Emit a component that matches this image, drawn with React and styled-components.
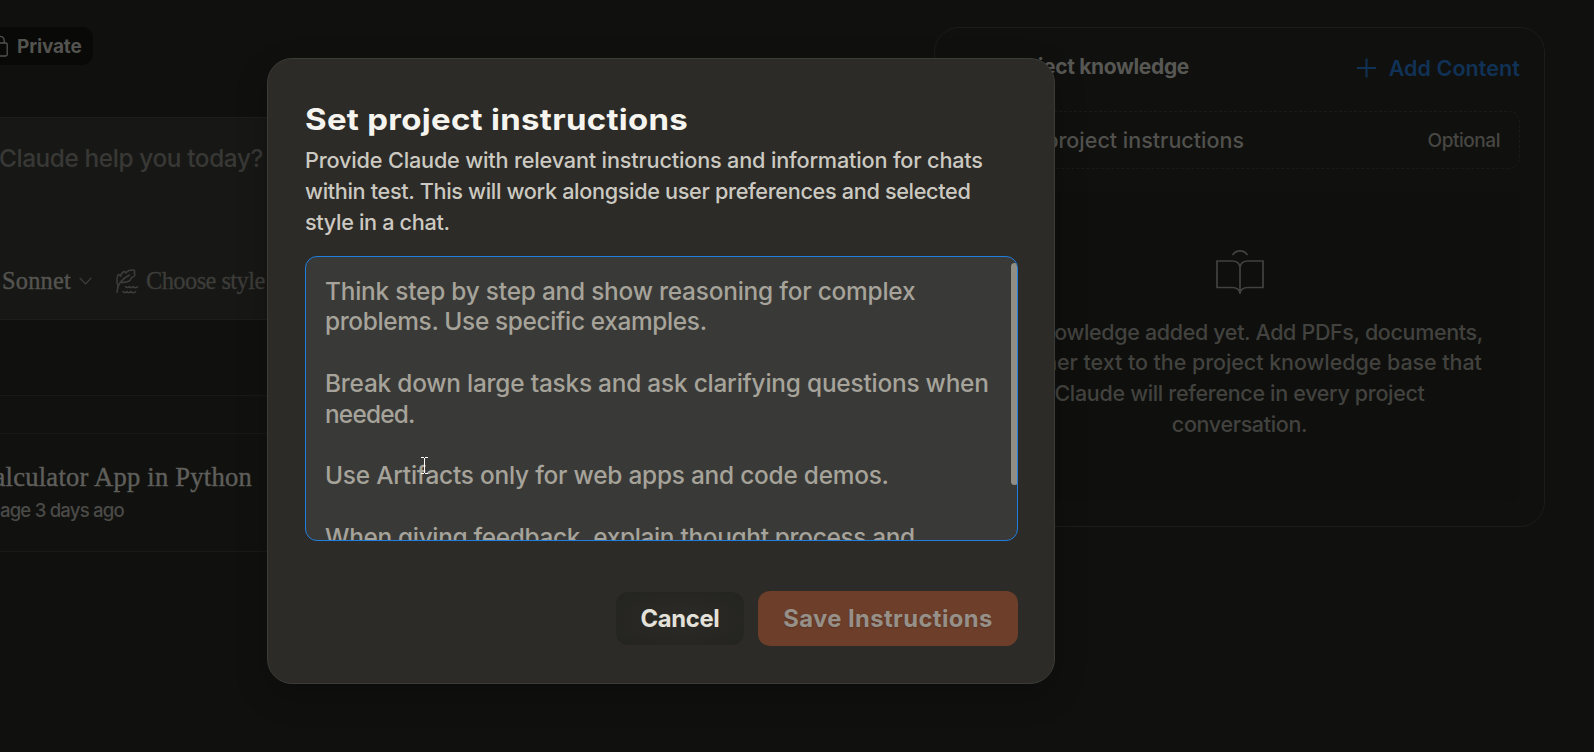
import React from "react";
import styled, { createGlobalStyle } from "styled-components";

const sans = `Inter, "Liberation Sans", sans-serif`;
const serif = `"Liberation Serif", serif`;

const GlobalStyle = createGlobalStyle`
  * { box-sizing: border-box; }
  html, body { margin: 0; height: 100%; overflow: hidden; background: #10100e; }
  body { font-family: ${sans}; -webkit-font-smoothing: antialiased; }
`;

const Page = styled.div`
  position: relative;
  display: flex;
  align-items: flex-start;
  width: 1594px;
  height: 752px;
  overflow: hidden;
  background: #10100e;
`;

const Line = styled.div`
  white-space: nowrap;
  letter-spacing: ${(p) => p.$track || 0}px;
`;

/* ---------- project column ---------- */

const Main = styled.main`
  display: flex;
  flex-direction: column;
  width: 934px;
  height: 752px;
  padding-top: 27px;
`;

const PrivacyBadge = styled.div`
  display: flex;
  align-items: center;
  gap: 9px;
  width: 93px;
  height: 38px;
  border-radius: 0 11px 11px 0;
  background: #090907;
  color: #53534f;
  font-size: 19px;
  font-weight: 700;

  svg { flex: none; margin-left: -8px; }
`;

const Composer = styled.section`
  display: flex;
  flex-direction: column;
  justify-content: space-between;
  height: 203px;
  margin-top: 52px;
  padding: 24px 0 21px;
  border: solid #1d1d1b;
  border-width: 1px 0;
  background: #171715;
`;

const Prompt = styled(Line)`
  display: flex;
  justify-content: flex-end;
  width: 263px;
  line-height: 32px;
  font-size: 24.4px;
  font-weight: 450;
  color: #383835;
`;

const ComposerTools = styled.div`
  display: flex;
  align-items: center;
  height: 34px;
  padding-left: 2px;
  font-family: ${serif};
  font-size: 24.4px;
`;

const ModelPicker = styled.div`
  display: flex;
  align-items: center;
  gap: 8px;
  width: 114px;
  color: #545450;
  -webkit-text-stroke: 0.4px #545450;
`;

const StylePicker = styled.div`
  display: flex;
  align-items: center;
  gap: 7px;
  color: #3d3d3a;
  -webkit-text-stroke: 0.3px #3d3d3a;
`;

const ChatList = styled.section`
  margin-top: 75px;
  height: 157px;
  border: solid #191917;
  border-width: 1px 0;
  background: #11110f;
`;

const ChatListHeader = styled.div`
  height: 38px;
  border-bottom: 1px solid #191917;
`;

const ChatRow = styled.div`
  display: flex;
  flex-direction: column;
  align-items: flex-start;
  padding-top: 26px;
`;

const ChatTitle = styled(Line)`
  display: flex;
  justify-content: flex-end;
  width: 252px;
  font-family: ${serif};
  font-size: 26.6px;
  line-height: 34px;
  color: #5f5f5b;
  -webkit-text-stroke: 0.4px #5f5f5b;
`;

const ChatMeta = styled(Line)`
  display: flex;
  justify-content: flex-end;
  width: 124px;
  margin-top: 1px;
  font-size: 18.6px;
  font-weight: 450;
  line-height: 30px;
  color: #4a4a47;
`;

/* ---------- knowledge panel ---------- */

const KnowledgePanel = styled.aside`
  display: flex;
  flex-direction: column;
  width: 611px;
  height: 500px;
  margin-top: 27px;
  padding: 23px 24px 24px 23px;
  border: 1px solid #1c1c1a;
  border-radius: 25px;
  background: #10100e;
`;

const PanelHeader = styled.header`
  display: flex;
  justify-content: space-between;
  align-items: center;
  height: 34px;
`;

const PanelTitle = styled(Line)`
  display: flex;
  justify-content: flex-end;
  width: 231px;
  margin-top: -3px;
  font-size: 21px;
  font-weight: 700;
  color: #575753;
`;

const AddContent = styled.div`
  display: flex;
  align-items: center;
  gap: 12px;
  font-size: 21.5px;
  font-weight: 600;
  color: #103256;
`;

const InstructionRow = styled.div`
  display: flex;
  justify-content: space-between;
  align-items: center;
  height: 58px;
  margin-top: 26px;
  padding-right: 19px;
  border: 1px dashed #1a1a18;
  border-radius: 11px;
`;

const InstructionLabel = styled(Line)`
  display: flex;
  justify-content: flex-end;
  width: 285px;
  font-size: 21.5px;
  font-weight: 500;
  color: #51514d;
`;

const OptionalLabel = styled(Line)`
  margin-top: 1px;
  font-size: 19px;
  font-weight: 450;
  color: #474743;
`;

const EmptyState = styled.div`
  display: flex;
  flex-direction: column;
  align-items: center;
  flex: 1;
  margin-top: 22px;
  padding: 57.5px 0 0 1px;
  border-radius: 12px;
  background: #0f0f0d;
  color: #42423f;

  svg { margin-bottom: 22px; }
`;

const EmptyLine = styled(Line)`
  font-size: 21.5px;
  font-weight: 450;
  line-height: 30.7px;
`;

/* ---------- dialog ---------- */

const DialogLayer = styled.div`
  position: absolute;
  inset: 0;
  padding: 58px 0 0 267px;
`;

const Dialog = styled.div`
  display: flex;
  flex-direction: column;
  width: 788px;
  height: 626px;
  padding: 42px 36px 37px 37px;
  border: 1px solid #3b3b38;
  border-radius: 25px;
  background: #2c2b27;
  box-shadow: 0 12px 32px rgba(0, 0, 0, 0.22);
`;

const DialogTitle = styled.h2`
  margin: 0;
  align-self: flex-start;
  line-height: 38px;
  font-size: 29.2px;
  font-weight: 650;
  letter-spacing: 0.25px;
  white-space: nowrap;
  color: #f5f4ef;
  transform: scaleX(1.13);
  transform-origin: left center;
`;

const Description = styled.div`
  margin-top: 6px;
  font-size: 21.7px;
  font-weight: 500;
  line-height: 31px;
  color: #cbc9c1;
`;

const TextField = styled.div`
  position: relative;
  height: 285px;
  margin-top: 18px;
  padding: 18.6px 20px 0 19px;
  overflow: hidden;
  border: 1px solid #207fde;
  border-radius: 12px;
  background: #393937;
  color: #a6a39a;
  font-size: 24.4px;
  font-weight: 450;
  line-height: 30.75px;
`;

const FieldLine = styled(Line)`
  height: 30.75px;
`;

const ScrollThumb = styled.div`
  position: absolute;
  top: 6px;
  right: -1px;
  width: 7px;
  height: 222px;
  border-radius: 4px;
  background: #918e85;
`;

const TextCursor = styled.svg`
  position: absolute;
  left: 115px;
  top: 200px;
`;

const Actions = styled.footer`
  display: flex;
  align-items: center;
  justify-content: flex-end;
  gap: 14px;
  margin-top: 50px;
`;

const Button = styled.button`
  display: flex;
  align-items: center;
  justify-content: center;
  padding: 0;
  border: 0;
  border-radius: 12px;
  font-family: ${sans};
  font-size: 23.8px;
  font-weight: 700;
  white-space: nowrap;
`;

const CancelButton = styled(Button)`
  width: 128px;
  height: 53px;
  letter-spacing: -0.35px;
  color: #e3e1da;
  background: radial-gradient(ellipse at center, #2a2925 20%, #242421 90%);
`;

const SaveButton = styled(Button)`
  width: 260px;
  height: 55px;
  letter-spacing: 0.4px;
  color: #969089;
  background: #6d3f2b;
  text-shadow: 0 1px 2px rgba(0, 0, 0, 0.2);
`;

/* ---------- icons ---------- */

const LockIcon = () => (
  <svg width="16" height="22" viewBox="0 0 16 22" fill="none" stroke="#53534f" strokeWidth="1.3">
    <rect x="0.8" y="8" width="14.4" height="13" rx="1.5" />
    <path d="M3.8 8V5.5a4.2 4.2 0 0 1 8.4 0V8" />
  </svg>
);

const ChevronIcon = () => (
  <svg width="13" height="8" viewBox="0 0 13 8" fill="none" stroke="#40403d" strokeWidth="1.2">
    <path d="M0.7 0.8 6.5 6.8 12.3 0.8" />
  </svg>
);

const QuillIcon = () => (
  <svg width="23" height="25" viewBox="0 0 23 25" fill="none" stroke="currentColor" strokeWidth="1.5" strokeLinecap="round" strokeLinejoin="round">
    <path d="M1 23.5C1 18 3.5 11 13.5 6" />
    <path d="M2 17C.7 13.500.8 8.500 2.200 5.500c1.300.2 2 .8 2.300 1.800C5 5 6.500 3.200 8.300 2.500c.9.3 1.300.8 1.500 1.500C11.200 1.800 14 .7 18 1c.9 1 .8 2.200.2 3.200.6.500.8 1.300.6 2.100-1 1.500-2.300 2.200-3.800 2.700.1.900-.2 1.600-.8 2.100C12 13 8.500 13.500 5 13.500" />
    <path d="M9.500 17.500c.4 1 2.600 1.600 3.600 0 .9 1.500 3 1.500 3.900 0 .9 1.500 3 1.500 4.500.3" />
    <path d="M7 22.500c.9 1.500 3 1.500 3.900 0 .9 1.500 3 1.500 3.900 0 .9 1.500 3 1.500 4.700.3" />
  </svg>
);

const PlusIcon = () => (
  <svg width="20" height="20" viewBox="0 0 20 20" fill="none" stroke="currentColor" strokeWidth="2">
    <path d="M9.500 .5v19M0 10h19" />
  </svg>
);

const BookIcon = () => (
  <svg width="48" height="46" viewBox="0 0 48 46" fill="none" stroke="currentColor" strokeWidth="1.7">
    <path d="M24 45V17.500c-1-3.500-3.500-5.500-7.500-5.500H1v26.500h15.500c4 0 6.500 1.500 7.500 5.500 1-4 3.500-5.500 7.500-5.500H47V12H31.500c-4 0-6.500 2-7.500 5.500" />
    <path d="M16.500 6c4-5.500 11-5.500 15 0" />
  </svg>
);

const DESCRIPTION = [
  ["Provide Claude with relevant instructions and information for chats", -0.19],
  ["within test. This will work alongside user preferences and selected", -0.35],
  ["style in a chat.", -0.35],
];

const EXAMPLE = [
  ["Think step by step and show reasoning for complex", -0.21],
  ["problems. Use specific examples.", -0.34],
  ["", 0],
  ["Break down large tasks and ask clarifying questions when", -0.21],
  ["needed.", -0.8],
  ["", 0],
  ["Use Artifacts only for web apps and code demos.", -0.22],
  ["", 0],
  ["When giving feedback, explain thought process and", -0.32],
];

const EMPTY_TEXT = [
  ["No knowledge added yet. Add PDFs, documents,", -0.35],
  ["or other text to the project knowledge base that", -0.06],
  ["Claude will reference in every project", -0.32],
  ["conversation.", -0.35],
];

export default function App() {
  return (
    <>
      <GlobalStyle />
      <Page>
        <Main>
          <PrivacyBadge>
            <LockIcon />
            <Line $track={-0.15}>Private</Line>
          </PrivacyBadge>
          <Composer>
            <Prompt $track={-0.4}>Claude help you today?</Prompt>
            <ComposerTools>
              <ModelPicker>
                <Line $track={0.2}>Sonnet</Line>
                <ChevronIcon />
              </ModelPicker>
              <StylePicker>
                <QuillIcon />
                <Line $track={-0.55}>Choose style</Line>
              </StylePicker>
            </ComposerTools>
          </Composer>
          <ChatList>
            <ChatListHeader />
            <ChatRow>
              <ChatTitle $track={0.22}>alculator App in Python</ChatTitle>
              <ChatMeta $track={-0.8}>age 3 days ago</ChatMeta>
            </ChatRow>
          </ChatList>
        </Main>

        <KnowledgePanel>
          <PanelHeader>
            <PanelTitle $track={-0.35}>Project knowledge</PanelTitle>
            <AddContent>
              <PlusIcon />
              <Line $track={0.08}>Add Content</Line>
            </AddContent>
          </PanelHeader>
          <InstructionRow>
            <InstructionLabel>Set project instructions</InstructionLabel>
            <OptionalLabel $track={-0.45}>Optional</OptionalLabel>
          </InstructionRow>
          <EmptyState>
            <BookIcon />
            {EMPTY_TEXT.map(([text, track]) => (
              <EmptyLine key={text} $track={track}>{text}</EmptyLine>
            ))}
          </EmptyState>
        </KnowledgePanel>

        <DialogLayer>
          <Dialog role="dialog">
            <DialogTitle>Set project instructions</DialogTitle>
            <Description>
              {DESCRIPTION.map(([text, track]) => (
                <Line key={text} $track={track}>{text}</Line>
              ))}
            </Description>
            <TextField>
              {EXAMPLE.map(([text, track], i) => (
                <FieldLine key={i} $track={track}>{text}</FieldLine>
              ))}
              <ScrollThumb />
              <TextCursor width="8" height="17" viewBox="0 0 8 17" fill="none" stroke="#fff" strokeWidth="1">
                <path d="M0 .5h3M4 .5H7M0 16.500h3M4 16.500H7M3.500 1v15" />
              </TextCursor>
            </TextField>
            <Actions>
              <CancelButton>Cancel</CancelButton>
              <SaveButton>Save Instructions</SaveButton>
            </Actions>
          </Dialog>
        </DialogLayer>
      </Page>
    </>
  );
}
